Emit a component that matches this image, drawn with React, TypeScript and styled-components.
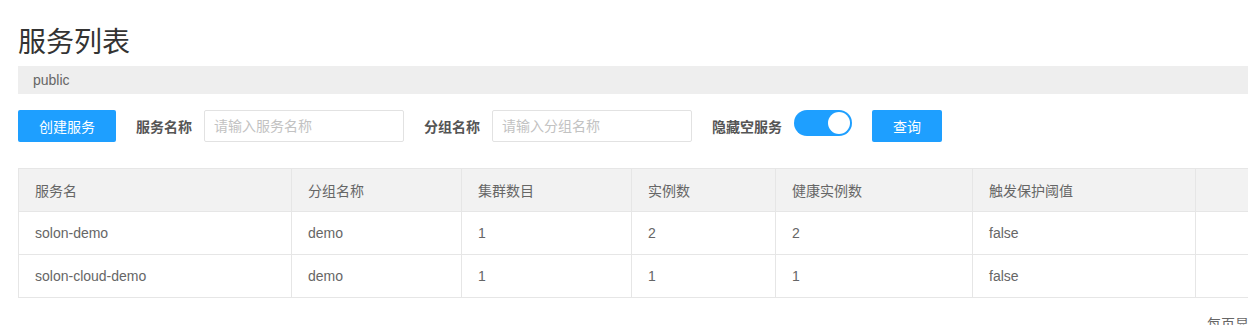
import React from "react";
import styled, { createGlobalStyle } from "styled-components";

const Global = createGlobalStyle`
  html, body { margin: 0; padding: 0; overflow: hidden; background: #fff; }
  body { font-family: "Helvetica Neue", "Liberation Sans", Arial, "Noto Sans CJK SC", sans-serif; color: #666; font-size: 14px; }
  * { box-sizing: border-box; }
`;

const Page = styled.div`
  width: 1480px;
  padding: 23px 0 0 18px;
`;

const Title = styled.h1`
  margin: 0;
  font-size: 28px;
  line-height: 40px;
  font-weight: normal;
  color: #333;
`;

const NsBar = styled.div`
  margin-top: 3px;
  height: 28px;
  line-height: 28px;
  background: #eee;
  padding-left: 15px;
  color: #666;
  font-size: 14px;
`;

const Toolbar = styled.div`
  margin-top: 16px;
  display: flex;
  align-items: center;
  height: 32px;
`;

const Button = styled.button<{ $w: number }>`
  width: ${(p) => p.$w}px;
  height: 32px;
  border: none;
  border-radius: 2px;
  background: #1e9fff;
  color: #fff;
  font-family: inherit;
  font-size: 14px;
  padding: 0;
  cursor: pointer;
`;

const Label = styled.label`
  margin-left: 20px;
  margin-right: 12px;
  font-weight: bold;
  color: #555;
  font-size: 14px;
  white-space: nowrap;
`;

const Input = styled.input`
  width: 200px;
  height: 32px;
  border: 1px solid #e2e2e2;
  border-radius: 2px;
  padding: 0 9px;
  font-family: inherit;
  font-size: 14px;
  color: #333;
  outline: none;
  &::placeholder { color: #c2c2c2; }
`;

const Switch = styled.div`
  position: relative;
  width: 58px;
  height: 26px;
  border-radius: 13px;
  background: #1e9fff;
  margin-top: -6px;
  margin-right: 20px;
`;

const Knob = styled.span`
  position: absolute;
  right: 2px;
  top: 2px;
  width: 22px;
  height: 22px;
  border-radius: 50%;
  background: #fff;
`;

const Table = styled.table`
  margin-top: 26px;
  border-collapse: collapse;
  table-layout: fixed;
  width: 1400px;
  font-size: 14px;
  color: #666;
`;

const Th = styled.th<{ $w: number }>`
  width: ${(p) => p.$w}px;
  height: 43px;
  padding: 0 16px;
  text-align: left;
  font-weight: normal;
  background: #f2f2f2;
  border: 1px solid #e6e6e6;
  color: #666;
`;

const Td = styled.td`
  height: 43px;
  padding: 0 16px;
  border: 1px solid #e6e6e6;
`;

const Footer = styled.div`
  margin-top: 15px;
  padding-left: 1189px;
  color: #666;
  font-size: 14px;
  white-space: nowrap;
`;

const cols = [
  { name: "服务名", w: 273 },
  { name: "分组名称", w: 170 },
  { name: "集群数目", w: 170 },
  { name: "实例数", w: 144 },
  { name: "健康实例数", w: 197 },
  { name: "触发保护阈值", w: 223 },
  { name: "", w: 223 },
];

const rows = [
  ["solon-demo", "demo", "1", "2", "2", "false", ""],
  ["solon-cloud-demo", "demo", "1", "1", "1", "false", ""],
];

export default function App() {
  return (
    <>
      <Global />
      <Page>
        <Title>服务列表</Title>
        <NsBar>public</NsBar>
        <Toolbar>
          <Button $w={98}>创建服务</Button>
          <Label>服务名称</Label>
          <Input placeholder="请输入服务名称" />
          <Label>分组名称</Label>
          <Input placeholder="请输入分组名称" />
          <Label>隐藏空服务</Label>
          <Switch>
            <Knob />
          </Switch>
          <Button $w={70}>查询</Button>
        </Toolbar>
        <Table>
          <thead>
            <tr>
              {cols.map((c, i) => (
                <Th key={i} $w={c.w}>
                  {c.name}
                </Th>
              ))}
            </tr>
          </thead>
          <tbody>
            {rows.map((r, i) => (
              <tr key={i}>
                {r.map((v, j) => (
                  <Td key={j}>{v}</Td>
                ))}
              </tr>
            ))}
          </tbody>
        </Table>
        <Footer>每页显示 10 条</Footer>
      </Page>
    </>
  );
}
